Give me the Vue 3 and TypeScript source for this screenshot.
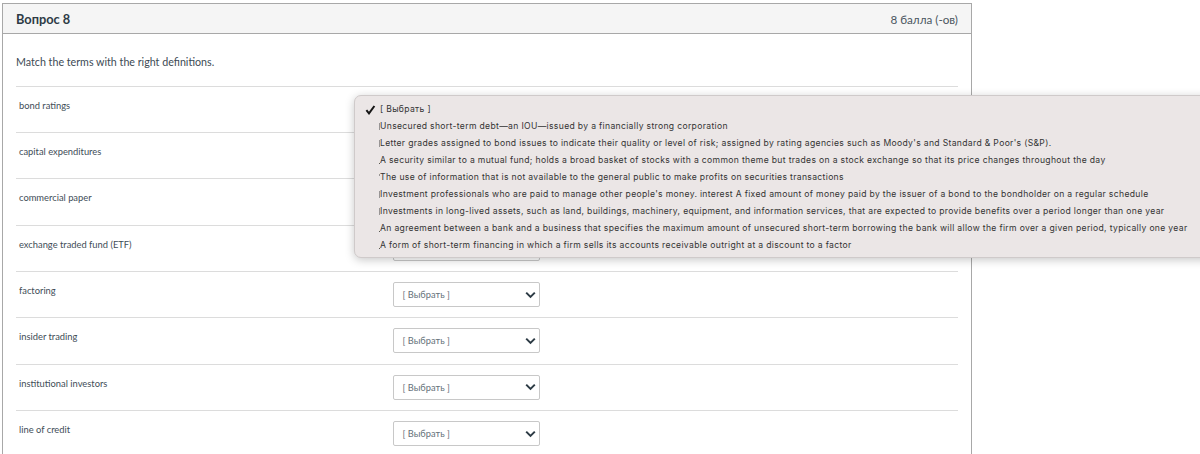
<script setup lang="ts">
const terms: string[] = [
  'bond ratings',
  'capital expenditures',
  'commercial paper',
  'exchange traded fund (ETF)',
  'factoring',
  'insider trading',
  'institutional investors',
  'line of credit',
]

// mark = the little clipped stroke the menu shows in front of each label
const options: { text: string; mark: string }[] = [
  { mark: 'bar', text: 'Unsecured short-term debt—an IOU—issued by a financially strong corporation' },
  { mark: 'bar', text: "Letter grades assigned to bond issues to indicate their quality or level of risk; assigned by rating agencies such as Moody's and Standard & Poor's (S&P)." },
  { mark: 'dot', text: 'A security similar to a mutual fund; holds a broad basket of stocks with a common theme but trades on a stock exchange so that its price changes throughout the day' },
  { mark: 'top', text: 'The use of information that is not available to the general public to make profits on securities transactions' },
  { mark: 'bar', text: "Investment professionals who are paid to manage other people's money. interest A fixed amount of money paid by the issuer of a bond to the bondholder on a regular schedule" },
  { mark: 'bar', text: 'Investments in long-lived assets, such as land, buildings, machinery, equipment, and information services, that are expected to provide benefits over a period longer than one year' },
  { mark: 'dot', text: 'An agreement between a bank and a business that specifies the maximum amount of unsecured short-term borrowing the bank will allow the firm over a given period, typically one year' },
  { mark: 'dot', text: 'A form of short-term financing in which a firm sells its accounts receivable outright at a discount to a factor' },
]
</script>

<template>
  <div class="page">
    <section class="question">
      <header class="question-head">
        <h2>Вопрос 8</h2>
        <span class="points">8 балла (-ов)</span>
      </header>
      <div class="question-body">
        <p class="prompt">Match the terms with the right definitions.</p>
        <div v-for="term in terms" :key="term" class="row">
          <span class="term">{{ term }}</span>
          <div class="select">
            <span>[ Выбрать ]</span>
            <svg width="11" height="8" viewBox="0 0 11 8" aria-hidden="true">
              <path d="M1.2 1.6 5.5 5.9 9.8 1.6" fill="none" stroke="#2d3b45" stroke-width="2" />
            </svg>
          </div>
        </div>
      </div>
    </section>

    <!-- native dropdown, open over the first row -->
    <div class="menu">
      <div class="opt">
        <svg class="check" width="11" height="10" viewBox="0 0 11 10" aria-hidden="true">
          <path d="M1.4 5.2 4 8.4 9.4 1" fill="none" stroke="#161616" stroke-width="2" />
        </svg>
        [ Выбрать ]
      </div>
      <div v-for="opt in options" :key="opt.text" class="opt" :class="opt.mark">{{ opt.text }}</div>
    </div>
  </div>
</template>

<style>
html, body { overflow: hidden; }
</style>

<style scoped>
.page {
  position: relative;
  width: 1200px;
  height: 454px;
  overflow: hidden;
  background: #fff;
  font-family: Lato, "Noto Sans", sans-serif;
  color: #2d3b45;
}

.question {
  margin: 3px 0 0 2px;
  width: 970px;
  border: 1px solid #a8a8a8;
  border-bottom: 0;
  height: 460px;
  box-sizing: border-box;
}

.question-head {
  display: flex;
  justify-content: space-between;
  align-items: center;
  height: 29px;
  padding: 0 13px;
  background: #f5f5f5;
  border-bottom: 1px solid #a8a8a8;
}

.question-head h2 {
  margin: 0;
  font-size: 12.8px;
  font-weight: 700;
}

.points {
  font-size: 11.7px;
  color: #4a5560;
}

.question-body {
  padding: 0 13px;
}

.prompt {
  margin: 0;
  padding-top: 21px;
  height: 51.8px;
  box-sizing: border-box;
  font-size: 10.7px;
  line-height: 14px;
  color: #3d4a54;
}

.row {
  display: flex;
  height: 46.33px;
  box-sizing: border-box;
  border-top: 1px solid #dcdcdc;
}

.term {
  width: 377px;
  padding: 12px 0 0 3px;
  box-sizing: border-box;
  font-size: 9.35px;
  line-height: 13px;
  color: #414d57;
}

.select {
  display: flex;
  align-items: center;
  justify-content: space-between;
  width: 147px;
  height: 25px;
  margin-top: 10px;
  padding: 0 2px 0 8.5px;
  box-sizing: border-box;
  border: 1px solid #c8c8c8;
  border-radius: 2px;
  font-size: 9.3px;
  color: #66717a;
}

.select svg {
  margin-right: 1px;
}

.menu {
  position: absolute;
  top: 95px;
  left: 354px;
  width: 870px;
  height: 163px;
  padding: 5px 0 0 25px;
  box-sizing: border-box;
  background: #ebe6e6;
  border: 1px solid #cfcaca;
  border-radius: 7px;
  box-shadow: 0 2px 10px rgba(0, 0, 0, 0.22);
  font-family: Inter, "Noto Sans", sans-serif;
  font-size: 8.6px;
  letter-spacing: 0.33px;
  color: #333;
}

.opt {
  position: relative;
  height: 17px;
  line-height: 17px;
  white-space: nowrap;
}

.opt.bar::before,
.opt.dot::before,
.opt.top::before {
  content: '';
  position: absolute;
  left: -1px;
  width: 1px;
  background: rgba(50, 50, 50, 0.45);
}

.opt.bar::before {
  top: 5px;
  height: 7px;
}

.opt.dot::before {
  top: 11px;
  height: 1px;
  background: rgba(50, 50, 50, 0.8);
}

.opt.top::before {
  top: 5px;
  height: 2px;
}

.check {
  position: absolute;
  left: -15px;
  top: 4px;
}
</style>
